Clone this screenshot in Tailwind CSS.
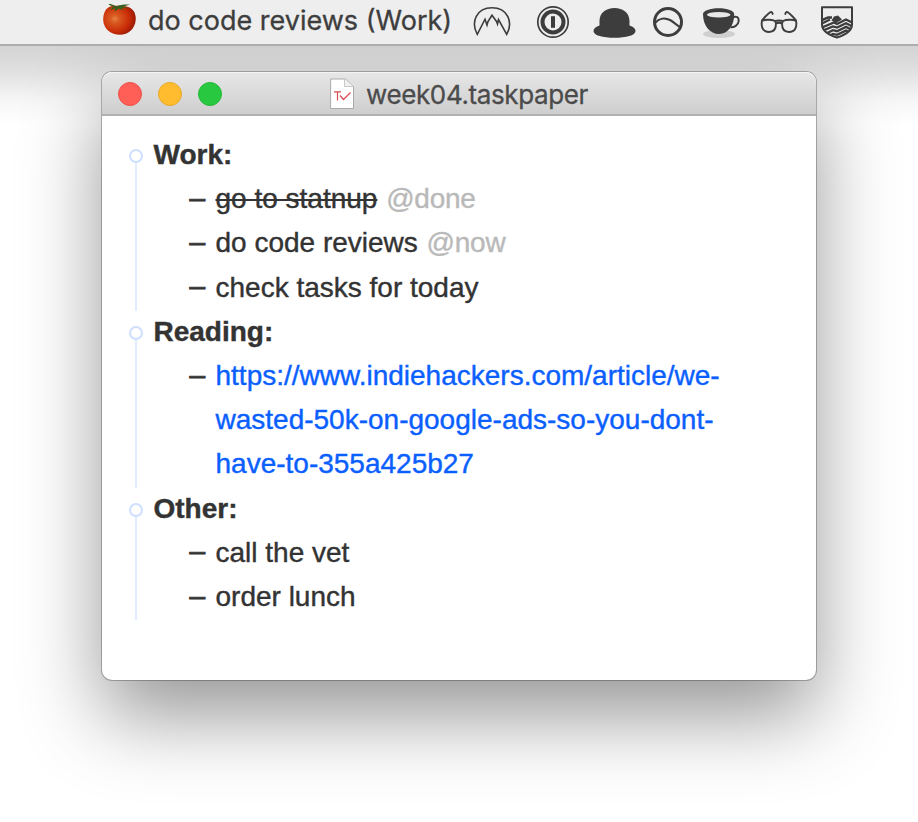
<!DOCTYPE html>
<html lang="en">
<head>
<meta charset="utf-8">
<title>week04.taskpaper</title>
<script src="https://cdn.jsdelivr.net/npm/@tailwindcss/browser@4"></script>
</head>
<body class="h-[822px] w-[918px] overflow-hidden bg-white">
<div class="flex h-[822px] w-[918px] flex-col overflow-hidden">
  <header class="relative z-10 h-[46px] shrink-0 border-b-2 border-[#adadad] bg-[#eeeeee] text-[#3d3d3d]">
    <div class="flex h-[44px] items-start pl-[102px]">
      <svg class="mt-[3px] h-8 w-[34px] shrink-0" viewBox="0 0 34 32">
        <defs>
          <radialGradient id="tomato" cx=".36" cy=".45" r=".68">
            <stop offset="0" stop-color="#e58247"/><stop offset=".2" stop-color="#d95a20"/><stop offset=".65" stop-color="#c92c08"/><stop offset="1" stop-color="#8e1504"/>
          </radialGradient>
        </defs>
        <path d="M9 3.200C13 2.500 22 2.500 27 4.200C32 6.500 34 11 33.700 17C33 26 26 31.800 18 31.800C9 31.800 1.500 26 1.200 17C1 10 4 4.500 9 3.200Z" fill="url(#tomato)"/>
        <path d="M6.500 6C10 3.800 11.500 4.300 12.500 4L6.500 1.800L8 .8L14.500 3.200C18 1.800 22 1.200 28 1.500L21 3.800L27 5.200L20 5L21.500 7.200L17 5.500L12.500 8.500L13 5.300L8.500 7.500L10.500 4.800Z" fill="#35601e"/>
      </svg>
      <span class="ml-[12px] w-[306px] whitespace-nowrap pt-[4px] font-['Inter','Liberation_Sans',sans-serif] text-[27px] leading-[34px] [-webkit-text-stroke:0.3px]">do code reviews (Work)</span>
      <svg class="ml-[19px] mt-[6px] h-8 w-[38px] shrink-0" viewBox="0 0 38 32" fill="none" stroke="#3d3d3d" stroke-width="1.600" stroke-linejoin="miter">
        <path d="M4.300 28.400C-2.500 16 3.500 1.800 19 1.800S40.500 16 33.700 28.400L25.500 13.500L24.500 18L23.500 15.500L19 9.200L15 15.500L14 19L12 13.200Z"/>
      </svg>
      <svg class="ml-[25px] mt-[5px] h-[34px] w-[34px] shrink-0" viewBox="0 0 34 34" fill="none" stroke="#3d3d3d">
        <circle cx="17" cy="17" r="15.200" stroke-width="1.700"/><circle cx="17" cy="17" r="10.500" stroke-width="4"/><path d="M17 11.200V22.800" stroke-width="4"/>
      </svg>
      <svg class="ml-[22px] mt-[6px] h-8 w-[44px] shrink-0" viewBox="0 0 44 32">
        <path d="M7.500 19.500V15C7.500 7 14 2 22.500 2S37.500 7 37.500 15V19.500C41 20.500 43.500 22.500 43.500 25C43.500 29.500 34 31.800 22.500 31.800S1.500 29.500 1.500 25C1.500 22.500 4 20.500 7.500 19.500Z" fill="#3d3d3d"/>
      </svg>
      <svg class="ml-[16px] mt-[6px] h-8 w-[32px] shrink-0" viewBox="0 0 32 32" fill="none" stroke="#3d3d3d">
        <circle cx="16" cy="16" r="13.500" stroke-width="3"/><path d="M3 17C7 12.200 13 11.500 18 14C22 16.200 25 19.500 28 21" stroke-width="2"/>
      </svg>
      <svg class="ml-[18px] mt-[6px] h-8 w-[38px] shrink-0" viewBox="0 0 38 32">
        <ellipse cx="17" cy="28" rx="16" ry="4" fill="#cfcfcf"/>
        <path d="M1 8C1 5 8 2.300 16.700 2.300S32 5 32.200 8C32.500 19 26 28 17 28S1 20 1 8Z" fill="#3d3d3d"/>
        <ellipse cx="16.700" cy="8.800" rx="11.800" ry="2.800" fill="#e9e9e9"/>
        <path d="M31 11.200C35 9.500 37 12 36.700 15C36.300 19.500 32 21.500 28.500 21.300" fill="none" stroke="#3d3d3d" stroke-width="2"/>
      </svg>
      <svg class="ml-[20px] mt-[6px] h-8 w-[38px] shrink-0" viewBox="0 0 38 32" fill="none" stroke="#3d3d3d" stroke-width="1.900" stroke-linecap="round">
        <path d="M2 14.800C5 13.300 12 13.500 15 15C18 14.200 20 14.200 23 15C26 13.500 33 13.300 36 14.800C37.300 21 35 26 29 26C24 26 22 22 22 17.500C20 16.500 18 16.500 16 17.500C16 22 14 26 9 26C3 26 .7 21 2 14.800ZM15 15L16 17.500M23 15L22 17.500"/>
        <path d="M2.300 14C5 11 8 7.500 10.500 6.200C11.800 5.700 12.500 6.500 12.700 8M35.700 14C33 11 30 7.500 27.500 6.200C26.200 5.700 25.500 6.500 25.300 8"/>
      </svg>
      <svg class="ml-[22px] mt-[5px] h-[34px] w-[34px] shrink-0" viewBox="0 0 34 34">
        <defs><clipPath id="shield"><path d="M2 2H32V20C32 26 25 30 17 33C9 30 2 26 2 20Z"/></clipPath></defs>
        <g clip-path="url(#shield)" fill="none" stroke="#3d3d3d" stroke-width="2.300">
          <path d="M0 16L8 12.500L12 12.500M0 19.500L10 14.500M2 22.500L14 17.500L17 19L26 14.500L34 18.500M2 26L13 21.500L17 22.500L26 18.200L34 22.200M5 29L13 25.200L17 26.200L26 21.900L34 25.900M8 31.500L13 28.900L17 29.900L26 25.600L32 28.600M13 33L17 33.500L26 29.300"/>
          <path d="M11.500 15.500L14 11.500L18 10.500L22 14.500L16 18Z" fill="#3d3d3d" stroke="none"/>
        </g>
        <path d="M2 2.200H32V19.500C32 26 25 30 17 32.500C9 30 2 26 2 19.500Z" fill="none" stroke="#3d3d3d" stroke-width="2" stroke-linejoin="round"/>
      </svg>
    </div>
  </header>

  <main class="relative flex-1 pl-[102px] pt-[26px]">
    <div class="absolute inset-x-0 top-0 flex h-[78px] flex-col">
      <div class="h-[26px] bg-linear-to-b from-[#d3d3d3] to-[#e1e1e1]"></div>
      <div class="h-[28px] bg-linear-to-b from-[#e1e1e1] to-[#f6f6f6]"></div>
      <div class="h-[24px] bg-linear-to-b from-[#f6f6f6] to-white"></div>
    </div>
    <section class="relative flex h-[608px] w-[714px] flex-col rounded-[10px] bg-white shadow-[0_0_0_1px_rgba(0,0,0,0.25),0_36px_80px_rgba(0,0,0,0.41)]">
      <div class="flex h-[44px] shrink-0 items-center rounded-t-[10px] border-b-2 border-[#b1b1b1] bg-linear-to-b from-[#e7e7e7] to-[#cecece] pl-4 shadow-[inset_0_1px_0_#f4f4f4]">
        <div class="flex gap-4 pt-[2px]">
          <i class="size-6 rounded-full border border-[#ee4f49] bg-[#ff5f57]"></i>
          <i class="size-6 rounded-full border border-[#e8aa2a] bg-[#febc2e]"></i>
          <i class="size-6 rounded-full border border-[#24b936] bg-[#28c840]"></i>
        </div>
        <svg class="ml-[106px] mt-[2px] h-[34px] w-[28px] shrink-0" viewBox="0 0 28 34">
          <path d="M2.600 2H17.500L25.500 10V31.500H2.600Z" fill="#fff" stroke="#aaa" stroke-width="1"/>
          <path d="M16.500 2V9.500H25" fill="#f1f1f1" stroke="#c8c8c8"/>
          <path d="M6 14.800H13M9.500 14.800V23.500M12 18.500L15.500 22.500L22.500 15.500" fill="none" stroke="#d84c4c" stroke-width="1.200"/>
        </svg>
        <h1 class="ml-[10px] whitespace-nowrap pt-[4px] font-['Inter','Liberation_Sans',sans-serif] text-[26px] leading-[34px] tracking-[-0.38px] text-[#4b4b4b] [-webkit-text-stroke:0.3px]">week04.taskpaper</h1>
      </div>
      <div class="pl-[26px] pt-[17px] font-['Liberation_Sans',sans-serif] text-[28px] leading-[44.2px] text-[#333333] [-webkit-text-stroke:0.4px]">
        <div class="flex">
          <div class="flex w-[16px] flex-col items-center pt-[16px]"><i class="size-[14px] shrink-0 rounded-full border-2 border-[#cfdfff]"></i><i class="-mb-px w-[2px] flex-1 bg-[#e2ecff]"></i></div>
          <div class="pl-[9.500px]">
            <h2 class="font-bold">Work:</h2>
            <ul class="pl-[36px]">
              <li class="flex"><span class="-mt-[1.500px] w-[26px] [-webkit-text-stroke:0.9px]">–</span><span><s class="decoration-2">go to statnup</s> <span class="ml-px tracking-[-0.250px] text-[#b9b9b9]">@done</span></span></li>
              <li class="flex"><span class="-mt-[1.500px] w-[26px] [-webkit-text-stroke:0.9px]">–</span><span>do code reviews <span class="ml-px tracking-[-0.250px] text-[#b9b9b9]">@now</span></span></li>
              <li class="flex"><span class="-mt-[1.500px] w-[26px] [-webkit-text-stroke:0.9px]">–</span><span>check tasks for today</span></li>
            </ul>
          </div>
        </div>
        <div class="flex">
          <div class="flex w-[16px] flex-col items-center pt-[16px]"><i class="size-[14px] shrink-0 rounded-full border-2 border-[#cfdfff]"></i><i class="-mb-px w-[2px] flex-1 bg-[#e2ecff]"></i></div>
          <div class="pl-[9.500px]">
            <h2 class="font-bold">Reading:</h2>
            <ul class="pl-[36px]">
              <li class="flex"><span class="-mt-[1.500px] w-[26px] [-webkit-text-stroke:0.9px]">–</span><a class="whitespace-nowrap text-[#0b5fff]">https://www.indiehackers.com/article/we-<br>wasted-50k-on-google-ads-so-you-dont-<br>have-to-355a425b27</a></li>
            </ul>
          </div>
        </div>
        <div class="flex">
          <div class="flex w-[16px] flex-col items-center pt-[16px]"><i class="size-[14px] shrink-0 rounded-full border-2 border-[#cfdfff]"></i><i class="-mb-px w-[2px] flex-1 bg-[#e2ecff]"></i></div>
          <div class="pl-[9.500px]">
            <h2 class="font-bold">Other:</h2>
            <ul class="pl-[36px]">
              <li class="flex"><span class="-mt-[1.500px] w-[26px] [-webkit-text-stroke:0.9px]">–</span><span>call the vet</span></li>
              <li class="flex"><span class="-mt-[1.500px] w-[26px] [-webkit-text-stroke:0.9px]">–</span><span>order lunch</span></li>
            </ul>
          </div>
        </div>
      </div>
    </section>
  </main>
</div>
</body>
</html>
